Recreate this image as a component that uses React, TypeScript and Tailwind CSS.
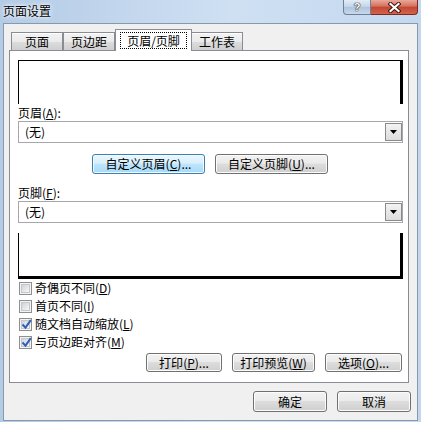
import type { ReactNode } from 'react';

const BTN =
  'flex items-center justify-center rounded-[3px] border border-[#707070] bg-[linear-gradient(#f2f2f2_0%,#ebebeb_45%,#dddddd_50%,#cfcfcf_100%)] shadow-[inset_0_0_0_1px_#fcfcfc] text-[12px] leading-none text-black';
const BTN_BLUE =
  'flex items-center justify-center rounded-[3px] border border-[#3c7fb1] bg-[linear-gradient(#eaf6fd_0%,#d9f0fc_45%,#bee6fd_50%,#a7d9f5_100%)] shadow-[inset_0_0_0_1px_#f4fbff] text-[12px] leading-none text-black';

function Acc({ k }: { k: string }) {
  return (
    <span>
      (<u>{k}</u>)
    </span>
  );
}

function Combo() {
  return (
    <div className="ml-[8px] flex h-[22px] w-[385px] items-stretch border border-[#a5a7ab] bg-white">
      <div className="flex flex-1 items-center pl-[6px] text-[12px]">(无)</div>
      <div className="m-[1px] mr-0 flex w-[17px] items-center justify-center border border-[#8a8a8a] bg-[linear-gradient(#f3f3f3,#dcdcdc)]">
        <svg width="7" height="4" viewBox="0 0 7 4">
          <path d="M0 0h7L3.5 4z" fill="#000" />
        </svg>
      </div>
    </div>
  );
}

function Check({ on, children }: { on?: boolean; children: ReactNode }) {
  return (
    <div className="flex h-[18px] items-center gap-[3px] pl-[9px] text-[12px]">
      <div className="flex h-[13px] w-[13px] items-center justify-center border border-[#8f8f8f] bg-[#f4f4f4]">
        <div className="relative h-[9px] w-[9px] border border-[#c4c8cd] bg-[linear-gradient(135deg,#cfd3d8,#f7f7f7)]">
          {on && (
            <svg className="absolute -left-[1px] -top-[2px]" width="11" height="11" viewBox="0 0 11 11">
              <path d="M1.5 5.5l3 3.2L9.8 1.2" fill="none" stroke="#2d5fb8" strokeWidth="2" />
            </svg>
          )}
        </div>
      </div>
      <span>{children}</span>
    </div>
  );
}

function Tab({ label }: { label: string }) {
  return (
    <div className="flex h-[18px] w-[52px] items-center justify-center border border-b-0 border-[#898c95] bg-[linear-gradient(#f2f2f2_0%,#ebebeb_50%,#dddddd_50%,#cfcfcf_100%)] text-[12px] shadow-[inset_0_1px_0_#fff]">
      {label}
    </div>
  );
}

export default function App() {
  return (
    <div className="flex h-[422px] w-[421px] flex-col bg-[linear-gradient(90deg,#b4cbe6_0%,#cfe0f3_55%,#c3d8ef_100%)] font-['Noto_Sans_CJK_SC','Liberation_Sans',sans-serif] text-black">
      {/* title bar */}
      <div className="flex h-[23px] items-start">
        <div className="pl-[3px] pt-[3px] text-[12px] leading-[16px] [text-shadow:0_0_6px_#fff,0_0_3px_#fff]">页面设置</div>
        <div className="ml-auto mr-[3px] flex">
          <div className="flex h-[15px] w-[28px] items-center justify-center rounded-bl-[4px] border border-t-0 border-[#6f7f95] bg-[linear-gradient(#e3ecf6,#c2d3e8_50%,#aec3dd_51%,#c9d9ec)] pt-[1px] font-['Liberation_Sans',sans-serif] text-[11px] font-bold leading-[11px] text-white [text-shadow:0_0_1px_#222,0_0_1px_#222,0_0_1px_#222]">
            ?
          </div>
          <div className="flex h-[15px] w-[47px] items-center justify-center rounded-br-[4px] border border-l-0 border-t-0 border-[#7e2a1e] bg-[linear-gradient(#e9a99b,#d6705d_45%,#c14732_50%,#d4624b)]">
            <svg width="13" height="11" viewBox="0 0 13 11">
              <path d="M2.5 2l8 7M10.5 2l-8 7" stroke="#3a120c" strokeWidth="4" strokeLinecap="square" />
              <path d="M2.5 2l8 7M10.5 2l-8 7" stroke="#fff" strokeWidth="2.2" strokeLinecap="square" />
            </svg>
          </div>
        </div>
      </div>

      {/* client */}
      <div className="ml-[3px] flex h-[398px] w-[415px] flex-col border border-[#8899ac] bg-[#f0f0f0]">
        {/* tabs */}
        <div className="mt-[5px] flex h-[21px] items-end pl-[7px]">
          <Tab label="页面" />
          <Tab label="页边距" />
          <div className="relative z-10 -mb-[1px] flex h-[22px] w-[77px] border border-b-0 border-[#898c95] bg-white px-[4px] pb-[2px] pt-[2px]">
            <div className="flex flex-1 items-center justify-center border border-dotted border-black text-[12px]">页眉/页脚</div>
          </div>
          <div className="-ml-[1px]">
            <Tab label="工作表" />
          </div>
        </div>

        {/* pane */}
        <div className="ml-[5px] flex h-[333px] w-[400px] flex-col border border-[#898c95] bg-white">
          <div className="ml-[8px] mt-[9px] h-[44px] w-[385px] border-l border-r-[3px] border-t border-black" />
          <div className="ml-[8px] mt-[1px] h-[16px] text-[12px] leading-[16px]">
            页眉<Acc k="A" />:
          </div>
          <Combo />
          <div className="ml-[82px] mt-[11px] flex gap-[10px]">
            <div className={`${BTN_BLUE} h-[20px] w-[113px]`}>
              自定义页眉<Acc k="C" />...
            </div>
            <div className={`${BTN} h-[20px] w-[113px]`}>
              自定义页脚<Acc k="U" />...
            </div>
          </div>
          <div className="ml-[8px] mt-[11px] h-[16px] text-[12px] leading-[16px]">
            页脚<Acc k="F" />:
          </div>
          <Combo />
          <div className="ml-[8px] mt-[10px] h-[46px] w-[385px] border-b-[3px] border-l border-r-[3px] border-black" />
          <Check>
            奇偶页不同<Acc k="D" />
          </Check>
          <Check>
            首页不同<Acc k="I" />
          </Check>
          <Check on>
            随文档自动缩放<Acc k="L" />
          </Check>
          <Check on>
            与页边距对齐<Acc k="M" />
          </Check>
          <div className="mr-[6px] mt-[2px] flex justify-end gap-[10px]">
            <div className={`${BTN} h-[19px] w-[76px]`}>
              打印<Acc k="P" />...
            </div>
            <div className={`${BTN} h-[19px] w-[83px]`}>
              打印预览<Acc k="W" />
            </div>
            <div className={`${BTN} h-[19px] w-[77px]`}>
              选项<Acc k="O" />...
            </div>
          </div>
        </div>

        {/* bottom buttons */}
        <div className="mr-[6px] mt-[8px] flex justify-end gap-[10px]">
          <div className={`${BTN} h-[21px] w-[74px] border-[#3c7fb1] shadow-[inset_0_0_0_1px_#7ecff5]`}>确定</div>
          <div className={`${BTN} h-[21px] w-[74px]`}>取消</div>
        </div>
      </div>
    </div>
  );
}
